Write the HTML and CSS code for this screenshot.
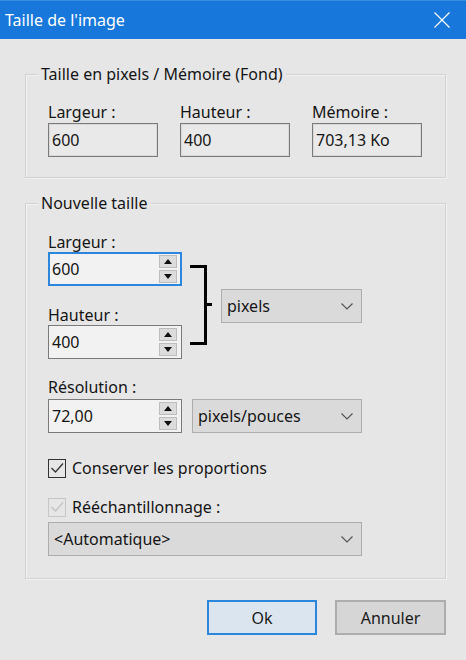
FILE: index.html
```html
<!DOCTYPE html>
<html lang="fr">

<head>
    <meta charset="UTF-8">
    <meta name="viewport" content="width=device-width, initial-scale=1.0">
    <title>Taille de l'image</title>
    <link rel="stylesheet" href="styles.css">
</head>

<body>
    <div class="titlebar">
        <span class="titlebar-text">Taille de l'image</span>
        <svg class="close-icon" width="16" height="16" viewBox="0 0 16 16">
            <path d="M0.5 0.5 L15.5 15.5 M15.5 0.5 L0.5 15.5" stroke="#fff" stroke-width="1.2" fill="none" />
        </svg>
    </div>

    <div class="dialog">
        <!-- Taille actuelle -->
        <div class="group group-info">
            <div class="group-title">Taille en pixels / Mémoire (Fond)</div>
            <div class="info-row">
                <div class="info-col">
                    <div class="label">Largeur :</div>
                    <div class="readonly">600</div>
                </div>
                <div class="info-col">
                    <div class="label">Hauteur :</div>
                    <div class="readonly">400</div>
                </div>
                <div class="info-col">
                    <div class="label">Mémoire :</div>
                    <div class="readonly">703,13 Ko</div>
                </div>
            </div>
        </div>

        <!-- Nouvelle taille -->
        <div class="group group-new">
            <div class="group-title">Nouvelle taille</div>

            <div class="size-row">
                <div class="size-fields">
                    <div class="label">Largeur :</div>
                    <div class="spin spin-focus">
                        <span class="spin-value">600</span>
                        <div class="spin-buttons">
                            <span class="spin-btn"><span class="arrow-up"></span></span>
                            <span class="spin-btn"><span class="arrow-down"></span></span>
                        </div>
                    </div>
                    <div class="label label-next">Hauteur :</div>
                    <div class="spin">
                        <span class="spin-value">400</span>
                        <div class="spin-buttons">
                            <span class="spin-btn"><span class="arrow-up"></span></span>
                            <span class="spin-btn"><span class="arrow-down"></span></span>
                        </div>
                    </div>
                </div>
                <svg class="bracket" width="22" height="80" viewBox="0 0 22 80">
                    <path d="M0 1.5 H15.5 V78.5 H0 M15.5 39.5 H22" stroke="#000" stroke-width="3" fill="none" />
                </svg>
                <div class="select select-unit">
                    <span>pixels</span>
                    <svg class="chevron" width="12" height="7" viewBox="0 0 12 7">
                        <path d="M0.5 0.5 L6 6 L11.5 0.5" stroke="#555" stroke-width="1.2" fill="none" />
                    </svg>
                </div>
            </div>

            <div class="label label-res">Résolution :</div>
            <div class="res-row">
                <div class="spin spin-res">
                    <span class="spin-value">72,00</span>
                    <div class="spin-buttons">
                        <span class="spin-btn"><span class="arrow-up"></span></span>
                        <span class="spin-btn"><span class="arrow-down"></span></span>
                    </div>
                </div>
                <div class="select select-res">
                    <span>pixels/pouces</span>
                    <svg class="chevron" width="12" height="7" viewBox="0 0 12 7">
                        <path d="M0.5 0.5 L6 6 L11.5 0.5" stroke="#555" stroke-width="1.2" fill="none" />
                    </svg>
                </div>
            </div>

            <div class="check check-first">
                <span class="check-box">
                    <svg width="16" height="16" viewBox="0 0 16 16">
                        <path d="M2.5 8 L6.5 12 L14 3.5" stroke="#333" stroke-width="1.3" fill="none" />
                    </svg>
                </span>
                <span>Conserver les proportions</span>
            </div>

            <div class="check check-disabled">
                <span class="check-box">
                    <svg width="16" height="16" viewBox="0 0 16 16">
                        <path d="M2.5 8 L6.5 12 L14 3.5" stroke="#c2c2c2" stroke-width="1.3" fill="none" />
                    </svg>
                </span>
                <span>Rééchantillonnage :</span>
            </div>

            <div class="select select-wide">
                <span>&lt;Automatique&gt;</span>
                <svg class="chevron" width="12" height="7" viewBox="0 0 12 7">
                    <path d="M0.5 0.5 L6 6 L11.5 0.5" stroke="#555" stroke-width="1.2" fill="none" />
                </svg>
            </div>
        </div>

        <div class="buttons">
            <button class="btn btn-default">Ok</button>
            <button class="btn">Annuler</button>
        </div>
    </div>
</body>

</html>
```

FILE: styles.css
```css
* {
    box-sizing: border-box;
}

body {
    margin: 0;
    width: 466px;
    height: 660px;
    background-color: #e6e6e6;
    font-family: "Noto Sans", "Open Sans", sans-serif;
    font-size: 16px;
    color: #151515;
    overflow: hidden;
}

.titlebar {
    height: 39px;
    background-color: #1777da;
    border-top: 1px solid #3a8ce0;
    display: flex;
    align-items: center;
    justify-content: space-between;
    padding: 0 16px 0 5px;
    color: white;
}

.titlebar-text {
    font-size: 16px;
    margin-top: -1px;
}

.close-icon {
    display: block;
}

.dialog {
    padding-left: 25px;
}

/* Cadres */
.group {
    width: 421px;
    border: 1px solid #d2d2d2;
    box-shadow: inset 1px 1px 0 #f2f2f2, 1px 1px 0 #f2f2f2;
}

.group-title {
    width: max-content;
    margin: -11px 0 0 12px;
    padding: 0 3px;
    line-height: 20px;
    height: 20px;
    background-color: #e6e6e6;
}

.group-info {
    margin-top: 35px;
    height: 104px;
}

.group-new {
    margin-top: 25px;
    height: 376px;
    padding-left: 22px;
}

.group-new .group-title {
    margin-left: -10px;
}

.label {
    line-height: 20px;
    height: 20px;
}

/* Taille actuelle */
.info-row {
    display: flex;
    gap: 22px;
    padding-left: 22px;
    margin-top: 18px;
}

.info-col {
    width: 110px;
}

.readonly {
    margin-top: 1px;
    height: 34px;
    line-height: 32px;
    padding-left: 3px;
    border: 1px solid #7a7a7a;
    box-shadow: inset 0 0 0 1px #d8d8d8;
    background-color: #e9e9e9;
}

/* Nouvelle taille */
.size-row {
    display: flex;
    align-items: flex-start;
    margin-top: 19px;
}

.size-fields {
    width: 134px;
}

.label-next {
    margin-top: 19px;
}

.spin {
    height: 34px;
    border: 1px solid #7a7a7a;
    background-color: #f2f2f2;
    display: flex;
    align-items: center;
    justify-content: space-between;
    padding: 0 4px 0 3px;
}

.spin-focus {
    border: 2px solid #2c86dc;
    padding: 0 3px 0 2px;
}

.spin-value {
    line-height: 20px;
}

.spin-buttons {
    display: flex;
    flex-direction: column;
    gap: 2px;
}

.spin-btn {
    width: 18px;
    height: 13px;
    background-color: #dcdcdc;
    border: 1px solid #bdbdbd;
    display: flex;
    align-items: center;
    justify-content: center;
}

.arrow-up {
    width: 0;
    height: 0;
    border-left: 4px solid transparent;
    border-right: 4px solid transparent;
    border-bottom: 5px solid #111;
}

.arrow-down {
    width: 0;
    height: 0;
    border-left: 4px solid transparent;
    border-right: 4px solid transparent;
    border-top: 5px solid #111;
}

.bracket {
    margin: 33px 0 0 8px;
    display: block;
}

.select {
    height: 34px;
    border: 1px solid #adadad;
    background-color: #dadada;
    display: flex;
    align-items: center;
    justify-content: space-between;
    padding: 0 8px 0 5px;
}

.chevron {
    display: block;
}

.select-unit {
    width: 141px;
    margin: 57px 0 0 9px;
}

.label-res {
    margin-top: 18px;
}

.res-row {
    display: flex;
    margin-top: 2px;
}

.spin-res {
    width: 134px;
}

.select-res {
    width: 170px;
    margin-left: 10px;
}

.check {
    display: flex;
    align-items: center;
    height: 22px;
    gap: 6px;
}

.check-first {
    margin-top: 24px;
}

.check-disabled {
    margin-top: 17px;
}

.check-box {
    width: 18px;
    height: 19px;
    border: 1px solid #333;
    display: flex;
    align-items: center;
    justify-content: center;
}

.check-disabled .check-box {
    border-color: #c6c6c6;
}

.select-wide {
    width: 314px;
    margin-top: 4px;
}

/* Boutons */
.buttons {
    width: 421px;
    display: flex;
    justify-content: flex-end;
    gap: 18px;
    margin-top: 21px;
}

.btn {
    width: 111px;
    height: 35px;
    font-family: inherit;
    font-size: 16px;
    color: #1a1a1a;
    background-color: #d6d6d6;
    border: 2px solid #adadad;
    padding: 0;
}

.btn-default {
    width: 110px;
    background-color: #dae5f0;
    border-color: #2c86dc;
}
```
